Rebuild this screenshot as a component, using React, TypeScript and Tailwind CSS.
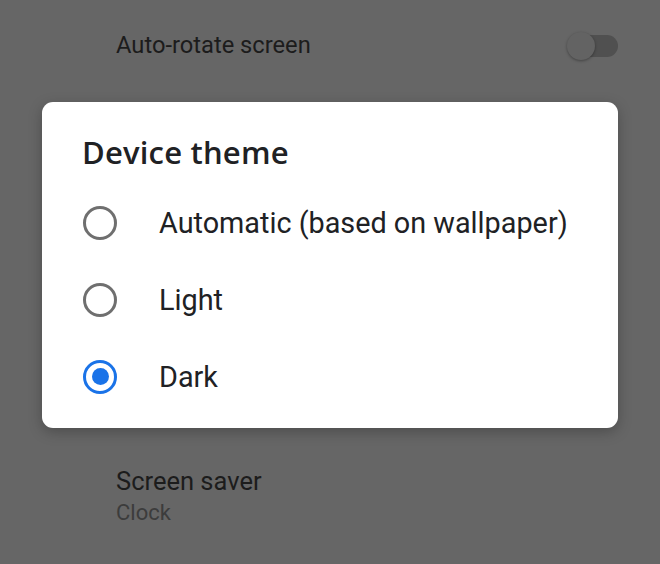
import React from "react";

function Radio({ checked }: { checked?: boolean }) {
  return checked ? (
    <div className="w-[34px] h-[34px] rounded-full border-[3px] border-[#1a73e8] flex items-center justify-center shrink-0">
      <div className="w-[17px] h-[17px] rounded-full bg-[#1a73e8]" />
    </div>
  ) : (
    <div className="w-[34px] h-[34px] rounded-full border-[3px] border-[#6f6f6f] shrink-0" />
  );
}

export default function App() {
  const opts = [
    { label: "Automatic (based on wallpaper)", checked: false },
    { label: "Light", checked: false },
    { label: "Dark", checked: true },
  ];
  return (
    <div
      className="w-[660px] h-[564px] bg-[#666666] flex flex-col overflow-hidden"
      style={{ fontFamily: "Roboto, 'Noto Sans', sans-serif" }}
    >
      <div className="h-[90px] shrink-0 flex items-center pl-[116px] pr-[42px] pt-[2px]">
        <div className="text-[23.7px] text-[#1c1c1c] flex-1 leading-none">Auto-rotate screen</div>
        <div className="relative w-[54px] h-[24px] flex items-center">
          <div className="ml-[8px] w-[46px] h-[22px] rounded-full bg-[#505050]" />
          <div className="absolute left-[3px] top-[-2px] w-[28px] h-[28px] rounded-full bg-[#636363] shadow-[0_1px_3px_rgba(0,0,0,0.35)]" />
        </div>
      </div>
      <div className="h-[12px] shrink-0" />
      <div className="ml-[42px] w-[576px] h-[326px] bg-white rounded-[11px] shadow-[0_4px_14px_rgba(0,0,0,0.25)] flex flex-col shrink-0">
        <div className="pt-[32px] pl-[40px] h-[82px] shrink-0">
          <div className="text-[31px] leading-[36px] text-[#202124] font-semibold tracking-[0.2px]" style={{ fontFamily: "'Open Sans', Roboto, sans-serif" }}>
            Device theme
          </div>
        </div>
        {opts.map((o) => (
          <div key={o.label} className="h-[77px] flex items-center pl-[41px] gap-[42px] shrink-0">
            <Radio checked={o.checked} />
            <div className="text-[28.8px] text-[#202124] leading-none pt-[2px]">{o.label}</div>
          </div>
        ))}
      </div>
      <div className="pl-[116px] pt-[38px] flex flex-col">
        <div className="text-[25.5px] leading-[30px] text-[#1c1c1c]">Screen saver</div>
        <div className="text-[22px] leading-[33px] text-[#3c3c3c]">Clock</div>
      </div>
    </div>
  );
}
